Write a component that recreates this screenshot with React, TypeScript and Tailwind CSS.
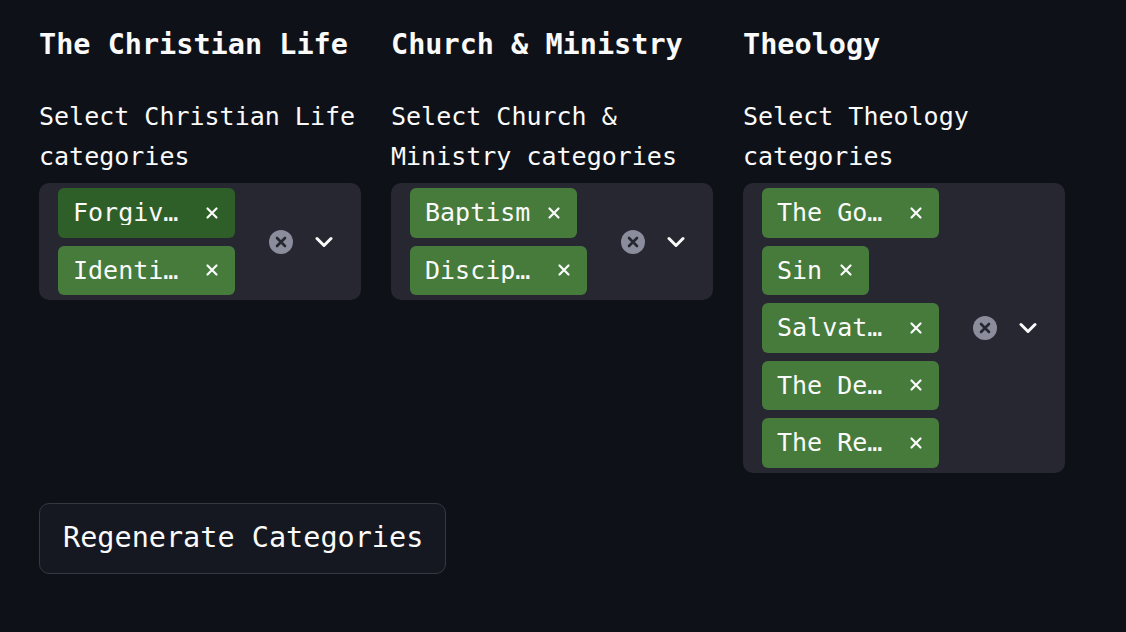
import type { ReactNode } from "react";

const MONO = "font-['DejaVu_Sans_Mono','Liberation_Mono',monospace]";

type Column = {
  title: string;
  label: ReactNode;
  chips: { name: string; active?: boolean }[];
};

const COLUMNS: Column[] = [
  {
    title: "The Christian Life",
    label: "Select Christian Life categories",
    chips: [{ name: "Forgiveness", active: true }, { name: "Identity in Christ" }],
  },
  {
    title: "Church & Ministry",
    label: "Select Church & Ministry categories",
    chips: [{ name: "Baptism" }, { name: "Discipleship" }],
  },
  {
    title: "Theology",
    label: "Select Theology categories",
    chips: [
      { name: "The Gospel" },
      { name: "Sin" },
      { name: "Salvation" },
      { name: "The Deity of Christ" },
      { name: "The Resurrection" },
    ],
  },
];

function SmallX() {
  return (
    <svg width="14" height="14" viewBox="0 0 14 14" className="shrink-0">
      <path d="M2.5 2.5 L11.5 11.5 M11.5 2.5 L2.5 11.5" stroke="#fafafa" strokeWidth="2.2" strokeLinecap="round" />
    </svg>
  );
}

function Chip({ name, active }: { name: string; active?: boolean }) {
  return (
    <span
      className={`flex items-center h-[49.5px] pl-[15px] pr-[16px] rounded-[6px] text-[25px] text-[#fafafa] ${
        active ? "bg-[#2f5f28]" : "bg-[#467b3c]"
      }`}
    >
      <span className="truncate max-w-[115px] leading-none">{name}</span>
      <span className="ml-[17px] flex items-center">
        <SmallX />
      </span>
    </span>
  );
}

function ClearIcon() {
  return (
    <svg width="24" height="24" viewBox="0 0 24 24">
      <circle cx="12" cy="12" r="12" fill="#8b8d9c" />
      <path d="M8 8 L16 16 M16 8 L8 16" stroke="#262730" strokeWidth="2.6" strokeLinecap="round" />
    </svg>
  );
}

function Chevron() {
  return (
    <svg width="18" height="12" viewBox="0 0 18 12">
      <path d="M2 2.5 L9 9.5 L16 2.5" fill="none" stroke="#fafafa" strokeWidth="3" strokeLinecap="round" strokeLinejoin="round" />
    </svg>
  );
}

function MultiSelect({ col }: { col: Column }) {
  return (
    <div className="flex flex-col">
      <h3 className="text-[28.5px] font-bold leading-[34px] text-[#fafafa]">{col.title}</h3>
      <label className="mt-[35px] text-[25px] leading-[40px] text-[#fafafa]">{col.label}</label>
      <div className="mt-[6px] flex items-center rounded-[10px] bg-[#262730] py-[5px] pl-[19px] pr-[28px]">
        <div className="flex flex-col items-start gap-[8px] flex-1">
          {col.chips.map((c) => (
            <Chip key={c.name} name={c.name} active={c.active} />
          ))}
        </div>
        <div className="flex items-center gap-[22px]">
          <ClearIcon />
          <Chevron />
        </div>
      </div>
    </div>
  );
}

export default function App() {
  return (
    <div className={`min-h-[632px] w-full bg-[#0e1117] pl-[39px] pt-[28px] ${MONO}`}>
      <div className="grid grid-cols-[322px_322px_322px] gap-x-[30px] items-start">
        {COLUMNS.map((c) => (
          <MultiSelect key={c.title} col={c} />
        ))}
      </div>
      <button className="mt-[30px] h-[71px] w-[407px] rounded-[10px] border border-[#353842] bg-[#151821] pl-[23px] text-left text-[28.5px] text-[#fafafa]">
        Regenerate Categories
      </button>
    </div>
  );
}
